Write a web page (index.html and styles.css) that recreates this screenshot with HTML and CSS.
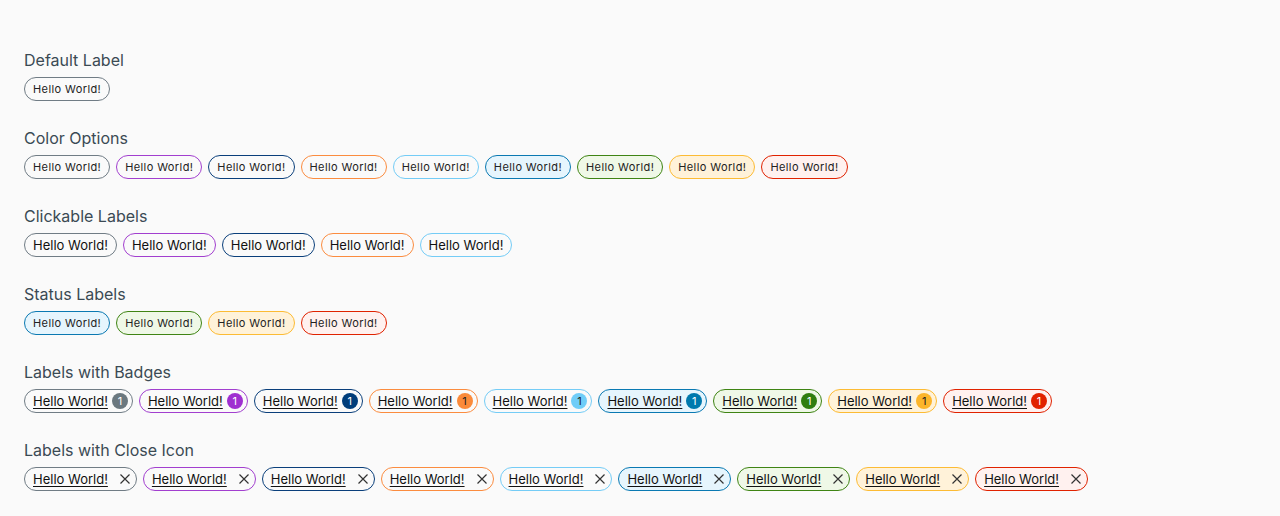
FILE: index.html
```html
<!DOCTYPE html>
<html lang="en">
<head>
<meta charset="utf-8">
<title>Labels</title>
<link rel="stylesheet" href="styles.css">
</head>
<body>
<main class="page">
  <section class="group">
    <h4 class="title">Default Label</h4>
    <div class="row">
      <span class="label">Hello World!</span>
    </div>
  </section>

  <section class="group">
    <h4 class="title">Color Options</h4>
    <div class="row">
      <span class="label">Hello World!</span>
      <span class="label c-purple">Hello World!</span>
      <span class="label c-blue">Hello World!</span>
      <span class="label c-orange">Hello World!</span>
      <span class="label c-light-blue">Hello World!</span>
      <span class="label c-info">Hello World!</span>
      <span class="label c-success">Hello World!</span>
      <span class="label c-warning">Hello World!</span>
      <span class="label c-danger">Hello World!</span>
    </div>
  </section>

  <section class="group">
    <h4 class="title">Clickable Labels</h4>
    <div class="row">
      <a class="label big">Hello World!</a>
      <a class="label big c-purple">Hello World!</a>
      <a class="label big c-blue">Hello World!</a>
      <a class="label big c-orange">Hello World!</a>
      <a class="label big c-light-blue">Hello World!</a>
    </div>
  </section>

  <section class="group">
    <h4 class="title">Status Labels</h4>
    <div class="row">
      <span class="label c-info">Hello World!</span>
      <span class="label c-success">Hello World!</span>
      <span class="label c-warning">Hello World!</span>
      <span class="label c-danger">Hello World!</span>
    </div>
  </section>

  <section class="group">
    <h4 class="title">Labels with Badges</h4>
    <div class="row">
      <a class="label big badged"><span class="txt">Hello World!</span><span class="badge b-gray">1</span></a>
      <a class="label big badged c-purple"><span class="txt">Hello World!</span><span class="badge b-purple">1</span></a>
      <a class="label big badged c-blue"><span class="txt">Hello World!</span><span class="badge b-blue">1</span></a>
      <a class="label big badged c-orange"><span class="txt">Hello World!</span><span class="badge b-orange">1</span></a>
      <a class="label big badged c-light-blue"><span class="txt">Hello World!</span><span class="badge b-light-blue">1</span></a>
      <a class="label big badged c-info"><span class="txt">Hello World!</span><span class="badge b-info">1</span></a>
      <a class="label big badged c-success"><span class="txt">Hello World!</span><span class="badge b-success">1</span></a>
      <a class="label big badged c-warning"><span class="txt">Hello World!</span><span class="badge b-warning">1</span></a>
      <a class="label big badged c-danger"><span class="txt">Hello World!</span><span class="badge b-danger">1</span></a>
    </div>
  </section>

  <section class="group">
    <h4 class="title">Labels with Close Icon</h4>
    <div class="row">
      <a class="label big closable"><span class="txt">Hello World!</span><span class="close"><svg viewBox="0 0 10 10"><path d="M0.5 0.5 L9.5 9.5 M9.5 0.5 L0.5 9.5"/></svg></span></a>
      <a class="label big closable c-purple"><span class="txt">Hello World!</span><span class="close"><svg viewBox="0 0 10 10"><path d="M0.5 0.5 L9.5 9.5 M9.5 0.5 L0.5 9.5"/></svg></span></a>
      <a class="label big closable c-blue"><span class="txt">Hello World!</span><span class="close"><svg viewBox="0 0 10 10"><path d="M0.5 0.5 L9.5 9.5 M9.5 0.5 L0.5 9.5"/></svg></span></a>
      <a class="label big closable c-orange"><span class="txt">Hello World!</span><span class="close"><svg viewBox="0 0 10 10"><path d="M0.5 0.5 L9.5 9.5 M9.5 0.5 L0.5 9.5"/></svg></span></a>
      <a class="label big closable c-light-blue"><span class="txt">Hello World!</span><span class="close"><svg viewBox="0 0 10 10"><path d="M0.5 0.5 L9.5 9.5 M9.5 0.5 L0.5 9.5"/></svg></span></a>
      <a class="label big closable c-info"><span class="txt">Hello World!</span><span class="close"><svg viewBox="0 0 10 10"><path d="M0.5 0.5 L9.5 9.5 M9.5 0.5 L0.5 9.5"/></svg></span></a>
      <a class="label big closable c-success"><span class="txt">Hello World!</span><span class="close"><svg viewBox="0 0 10 10"><path d="M0.5 0.5 L9.5 9.5 M9.5 0.5 L0.5 9.5"/></svg></span></a>
      <a class="label big closable c-warning"><span class="txt">Hello World!</span><span class="close"><svg viewBox="0 0 10 10"><path d="M0.5 0.5 L9.5 9.5 M9.5 0.5 L0.5 9.5"/></svg></span></a>
      <a class="label big closable c-danger"><span class="txt">Hello World!</span><span class="close"><svg viewBox="0 0 10 10"><path d="M0.5 0.5 L9.5 9.5 M9.5 0.5 L0.5 9.5"/></svg></span></a>
    </div>
  </section>
</main>
</body>
</html>
```

FILE: styles.css
```css
html, body {
  margin: 0;
  padding: 0;
  background: #fafafa;
}

body {
  font-family: Inter, "Liberation Sans", sans-serif;
  color: #000;
}

.page {
  padding: 48px 24px 0 24px;
  display: flex;
  flex-direction: column;
  gap: 25px;
}

.group {
  display: flex;
  flex-direction: column;
  gap: 5px;
}

.title {
  margin: 0;
  font-size: 16px;
  line-height: 24px;
  font-weight: 400;
  color: #3b4a54;
}

.row {
  display: flex;
  gap: 6px;
}

.label {
  box-sizing: border-box;
  display: inline-flex;
  align-items: center;
  height: 24px;
  padding: 0 8px;
  border: 1px solid #707c85;
  border-radius: 12px;
  font-size: 11px;
  letter-spacing: 0.4px;
  color: #222;
  background: transparent;
  white-space: nowrap;
}

.label.big {
  font-size: 13px;
  letter-spacing: 0;
  color: #111;
  cursor: pointer;
}

.label.badged {
  padding-right: 4px;
  gap: 4px;
}

.label.closable {
  padding-right: 6px;
  gap: 12px;
}

.txt {
  text-decoration: underline;
  text-underline-offset: 2px;
}

.badge {
  display: inline-flex;
  align-items: center;
  justify-content: center;
  width: 16px;
  height: 16px;
  border-radius: 50%;
  font-size: 11px;
  color: #fff;
}

.close {
  display: inline-flex;
  width: 10px;
  height: 10px;
}

.close svg {
  width: 10px;
  height: 10px;
  fill: none;
  stroke: #333;
  stroke-width: 1.2;
}

.c-purple { border-color: #a23fcf; }
.c-blue { border-color: #0a3f7b; }
.c-orange { border-color: #fb8c3f; }
.c-light-blue { border-color: #74ccf6; }
.c-info { border-color: #0a79b2; background: #e6f5fd; }
.c-success { border-color: #3f8414; background: #eff8e7; }
.c-warning { border-color: #fcbb34; background: #fff2d9; }
.c-danger { border-color: #e02200; background: #fff1ef; }

.b-gray { background: #6b787f; }
.b-purple { background: #9f2fd0; }
.b-blue { background: #003d7a; }
.b-orange { background: #fa8a3a; color: #222; }
.b-light-blue { background: #6fcdf8; color: #222; }
.b-info { background: #0079ad; }
.b-success { background: #2f7e0f; }
.b-warning { background: #fcb52a; color: #222; }
.b-danger { background: #e12200; }
```
